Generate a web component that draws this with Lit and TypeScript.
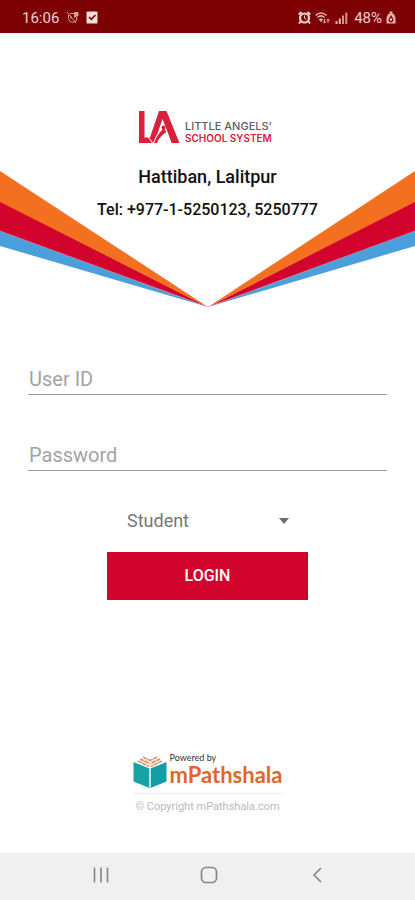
import { LitElement, html, css } from "lit";
import { customElement } from "lit/decorators.js";

@customElement("status-bar")
class StatusBar extends LitElement {
  static styles = css`
    :host {
      display: flex;
      align-items: center;
      justify-content: space-between;
      height: 33px;
      padding: 2px 19px 0 22px;
      box-sizing: border-box;
      background: #7d0002;
      color: #eecfcd;
      font: 15px/20px Roboto, sans-serif;
    }
    .group { display: flex; align-items: center; }
    .left { gap: 7px; }
    .right { gap: 4px; }
    svg { display: block; }
    .level { margin-left: 2px; }
  `;
  render() {
    return html`
      <div class="group left">
        <span>16:06</span>
        <svg width="13" height="13" viewBox="0 0 13 13" fill="none" stroke="#d79c98">
          <path d="M1 1 L10 12 M4 2.5 H8 M2.5 4 Q1.500 8 4 10.500 Q7 12.500 10 10 Q11.500 8 10.500 6 M5 5 V8" />
          <path d="M8.500 1.500 H12 V5 H10 L8.500 6.500 Z" fill="#d79c98" />
        </svg>
        <svg width="12" height="13" viewBox="0 0 12 13">
          <rect x="0.500" y="0.500" width="11" height="12" rx="1" fill="#f6dcda" />
          <path d="M3 6 L5.300 8.300 L9.500 4" fill="none" stroke="#7d0002" stroke-width="1.600" />
        </svg>
      </div>
      <div class="group right">
        <svg width="13" height="13" viewBox="0 0 13 13" fill="none" stroke="#f2d3cf">
          <circle cx="6.500" cy="7" r="4.500" stroke-width="2.200" />
          <path d="M0.800 3.500 L3.500 0.900 M12.200 3.500 L9.500 0.900 M2.500 10.500 L1 12.500 M10.500 10.500 L12 12.500" stroke-width="2" />
          <path d="M6.500 4.500 V7.200 L8.300 8.200" />
        </svg>
        <svg width="16" height="13" viewBox="0 0 16 13" fill="none" stroke="#e3b5b1">
          <path d="M0.700 4.500 Q6 -0.500 11.500 4.500 M2.500 6.500 Q6 3.300 9.500 6.500" stroke-width="1.500" />
          <path d="M4.300 8.500 Q6 7 7.500 8.500 L6 10.500 Z" fill="#e3b5b1" />
          <path d="M9.500 8 V12 M8 10.500 L9.500 12 L11 10.500 M13 12 V8 M11.500 9.500 L13 8 L14.500 9.500" />
        </svg>
        <svg width="13" height="13" viewBox="0 0 13 13">
          <path d="M0.500 10 h2 v3 h-2z M3.800 7.500 h2 v5.500 h-2z" fill="#e3b5b1" />
          <path d="M7 4.500 h2 v8.500 h-2z M10.300 1.500 h2 v11.500 h-2z" fill="#cf9592" />
        </svg>
        <span class="level">48%</span>
        <svg width="10" height="13" viewBox="0 0 10 13">
          <path d="M3.500 0.500 H6.500 V3 H8 L9.500 7 V12.500 H0.500 V7 L2 3 H3.500 Z" fill="#e3b5b1" />
          <path d="M5 4 L7.300 8 A2.500 2.500 0 1 1 2.700 8 Z" fill="#7d0002" />
          <circle cx="5" cy="8.500" r="1.200" fill="#f6dcda" />
        </svg>
      </div>
    `;
  }
}

@customElement("school-header")
class SchoolHeader extends LitElement {
  static styles = css`
    :host {
      display: block;
      position: relative;
      height: 274px;
      padding-top: 77px;
      box-sizing: border-box;
      text-align: center;
      font-family: Roboto, sans-serif;
      color: #111;
    }
    .rays {
      position: absolute;
      left: 0;
      bottom: 0;
      width: 100%;
      height: 137px;
    }
    .content { position: relative; }
    .brand {
      display: flex;
      justify-content: center;
      align-items: flex-end;
      gap: 5px;
      height: 34px;
      margin-right: 5px;
    }
    .names {
      text-align: left;
      font: 500 11px/12px "Inter", sans-serif;
      color: #5d6064;
      white-space: nowrap;
    }
    .names span { display: block; }
    .names .second { color: #d8213a; font-weight: 600; font-size: 10px; }
    h1 { margin: 21px 0 0; font-size: 18px; line-height: 24px; font-weight: 500; }
    p { margin: 11px 0 0; font-size: 16px; line-height: 20px; font-weight: 500; }
  `;
  render() {
    return html`
      <svg class="rays" viewBox="0 0 415 137" preserveAspectRatio="none">
        <path d="M0 76 L0 60 L208 137Z M415 76 L415 60 L208 137Z" fill="#4b9fdb" />
        <path d="M0 61 L0 31 L208 137Z M415 61 L415 31 L208 137Z" fill="#d2032d" />
        <path d="M0 32 L0 1 L208 137Z M415 32 L415 1 L208 137Z" fill="#f37021" />
        <path d="M0 61 L208 137 L415 61" stroke="#c9b5cf" stroke-width="0.500" fill="none" />
      </svg>
      <div class="content">
        <div class="brand">
          <svg width="42" height="34" viewBox="0 0 42 34">
            <path d="M1 1 H6.500 V27.500 H12 L21 1 H28.500 L41.500 33 H33.500 L30 23 L24.500 9 L17 31 L16 33 H1 Z" fill="#d8213a" />
            <path d="M15.500 33 C18 27 21 22 25.500 18 L28.500 22 C24 25 21 28 19 33 Z" fill="#d8213a" />
            <circle cx="25.500" cy="17.500" r="2" fill="#d8213a" />
            <path d="M10.500 27.500 L15 33.500 M15.500 33 Q18 25 23.500 20" stroke="#fff" fill="none" />
          </svg>
          <div class="names"><span>LITTLE ANGELS'</span><span class="second">SCHOOL SYSTEM</span></div>
        </div>
        <h1>Hattiban, Lalitpur</h1>
        <p>Tel: +977-1-5250123, 5250777</p>
      </div>
    `;
  }
}

@customElement("login-form")
class LoginForm extends LitElement {
  static styles = css`
    :host { display: block; padding: 56px 28px 0; font-family: Roboto, sans-serif; }
    form { display: flex; flex-direction: column; align-items: center; }
    input {
      display: block;
      width: 100%;
      height: 32px;
      margin-bottom: 44px;
      padding: 0 1px;
      box-sizing: border-box;
      border: 0;
      border-bottom: 1px solid #9a9a9a;
      border-radius: 0;
      outline: 0;
      background: none;
      font: 20px/24px Roboto, sans-serif;
      color: #333;
    }
    input::placeholder { color: #a3a3a3; opacity: 1; }
    .role { position: relative; width: 56%; max-width: 320px; margin-top: -12px; }
    select {
      display: block;
      width: 100%;
      height: 36px;
      padding: 0 20px;
      border: 0;
      outline: 0;
      background: none;
      appearance: none;
      font: 18px/24px Roboto, sans-serif;
      color: #777;
    }
    .arrow { position: absolute; right: 19px; top: 15px; pointer-events: none; }
    button {
      width: 56%;
      max-width: 320px;
      height: 48px;
      margin-top: 13px;
      border: 0;
      background: #d2032d;
      color: #fff;
      font: 500 16px/20px Roboto, sans-serif;
    }
  `;
  render() {
    return html`
      <form @submit=${(e: Event) => e.preventDefault()}>
        <input type="text" placeholder="User ID" aria-label="User ID" />
        <input type="password" placeholder="Password" aria-label="Password" />
        <div class="role">
          <select aria-label="Role"><option>Student</option></select>
          <svg class="arrow" width="10" height="6" viewBox="0 0 10 6"><path d="M0 0 H10 L5 6 Z" fill="#6c6c6c" /></svg>
        </div>
        <button type="submit">LOGIN</button>
      </form>
    `;
  }
}

@customElement("powered-by")
class PoweredBy extends LitElement {
  static styles = css`
    :host { display: flex; flex-direction: column; align-items: center; }
    .brand { display: flex; align-items: flex-end; gap: 3px; padding-bottom: 4px; border-bottom: 1px solid #eee; }
    .text { display: flex; flex-direction: column; padding-bottom: 2px; font-family: Lato, sans-serif; }
    .small { font-size: 9px; line-height: 10px; font-weight: 400; color: #333; }
    .name { font-size: 22px; line-height: 24px; font-weight: 700; color: #e2662c; }
    .copy { margin: 6px 0 0; font: 11px/14px Roboto, sans-serif; color: #b9b9b9; }
  `;
  render() {
    return html`
      <div class="brand">
        <svg width="34" height="34" viewBox="0 0 34 34">
          <path d="M5 7 L11 2 L17 4.500 L23 2 L29 7 L17 13 Z" fill="#fbe9dc" />
          <path d="M5 6 L16 11.500 M7 4 L16.500 8.500 M10 2 L17 5.500 M29 6 L18 11.500 M27 4 L17.500 8.500 M24 2 L17 5.500" fill="none" stroke="#d67b50" stroke-width="1.300" stroke-dasharray="4 1" />
          <path d="M0.500 7 L16.500 13.500 V33 L0.500 26.500 Z" fill="#16a3a6" />
          <path d="M17.500 13.500 L33.500 7 V26.500 L17.500 33 Z" fill="#139da4" />
          <path d="M17 13.500 V32" stroke="#d7f0f0" stroke-width="1.200" />
        </svg>
        <div class="text"><span class="small">Powered by</span><span class="name">mPathshala</span></div>
      </div>
      <p class="copy">© Copyright mPathshala.com</p>
    `;
  }
}

@customElement("nav-bar")
class NavBar extends LitElement {
  static styles = css`
    :host {
      display: flex;
      align-items: center;
      justify-content: center;
      gap: 68px;
      height: 47px;
      padding: 0 0 4px 2px;
      box-sizing: border-box;
      background: #f0f0f0;
    }
    button { display: flex; justify-content: center; width: 40px; padding: 0; border: 0; background: none; }
    svg { display: block; fill: none; stroke: #858585; stroke-width: 2; }
  `;
  render() {
    return html`
      <button aria-label="Recent apps"><svg width="18" height="18" viewBox="0 0 18 18"><path d="M2.500 1.500 V16.500 M9 1.500 V16.500 M15.500 1.500 V16.500" stroke-width="1.600" /></svg></button>
      <button aria-label="Home"><svg width="18" height="18" viewBox="0 0 18 18"><rect x="1.500" y="1.500" width="15" height="15" rx="4.500" stroke-width="1.700" /></svg></button>
      <button aria-label="Back"><svg width="18" height="18" viewBox="0 0 18 18"><path d="M13 2 L6 9 L13 16" stroke-width="1.600" /></svg></button>
    `;
  }
}

@customElement("app-root")
class AppRoot extends LitElement {
  static styles = css`
    :host { display: flex; flex-direction: column; min-height: 100vh; background: #fff; }
    main { display: flex; flex-direction: column; flex: 1; }
    powered-by { margin-top: auto; padding-bottom: 39px; }
  `;
  render() {
    return html`
      <status-bar></status-bar>
      <main>
        <school-header></school-header>
        <login-form></login-form>
        <powered-by></powered-by>
      </main>
      <nav-bar></nav-bar>
    `;
  }
}
